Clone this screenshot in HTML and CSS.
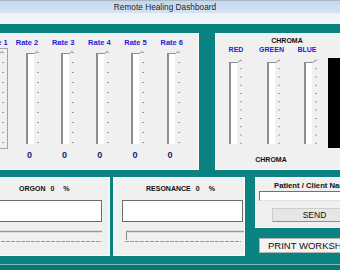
FILE: index.html
```html
<!DOCTYPE html>
<html lang="en">
  <head>
    <meta charset="UTF-8" />
    <meta name="viewport" content="width=device-width, initial-scale=1.0" />
    <title>Remote Healing Dashboard</title>
    <link rel="stylesheet" href="styles.css">
  </head>
  <body>
    <!-- shared slider drawings -->
    <svg class="defs" width="0" height="0">
      <symbol id="rate-track" viewBox="0 0 19 101">
        <rect x="1" y="5" width="2" height="91" fill="#8e8e8e" />
        <rect x="3" y="6" width="6" height="90" fill="#ffffff" />
        <polyline points="1,5.5 9.5,5.5 12.5,3" fill="none" stroke="#8e8e8e" />
        <line x1="13" y1="4" x2="13" y2="95" stroke="#9c9c9c" stroke-width="2" stroke-dasharray="1 9" />
      </symbol>
      <symbol id="chroma-track" viewBox="0 0 19 90">
        <rect x="1" y="5" width="2" height="82" fill="#8e8e8e" />
        <rect x="3" y="6" width="6" height="81" fill="#ffffff" />
        <polyline points="1,5.5 9.5,5.5 13.5,3" fill="none" stroke="#8e8e8e" />
        <line x1="13" y1="3" x2="13" y2="87" stroke="#9c9c9c" stroke-width="2" stroke-dasharray="1 7.27" />
      </symbol>
    </svg>

    <div class="titlebar">Remote Healing Dashboard</div>

    <div class="workspace">
      <div class="top-row">
        <div class="panel rates">
          <div class="rate-labels">
            <span class="rate-label first">Rate 1</span>
            <span class="rate-label">Rate 2</span>
            <span class="rate-label">Rate 3</span>
            <span class="rate-label">Rate 4</span>
            <span class="rate-label">Rate 5</span>
            <span class="rate-label">Rate 6</span>
          </div>
          <div class="rate-sliders">
            <svg class="vslider" width="19" height="101" viewBox="0 0 19 101">
              <use href="#rate-track" />
              <rect x="0.5" y="0.5" width="17" height="100" fill="none" stroke="#a4a4a4" />
            </svg>
            <svg class="vslider" width="19" height="101"><use href="#rate-track" /></svg>
            <svg class="vslider" width="19" height="101"><use href="#rate-track" /></svg>
            <svg class="vslider" width="19" height="101"><use href="#rate-track" /></svg>
            <svg class="vslider" width="19" height="101"><use href="#rate-track" /></svg>
            <svg class="vslider" width="19" height="101"><use href="#rate-track" /></svg>
          </div>
          <div class="rate-values">
            <span class="rate-value">0</span>
            <span class="rate-value">0</span>
            <span class="rate-value">0</span>
            <span class="rate-value">0</span>
            <span class="rate-value">0</span>
            <span class="rate-value">0</span>
          </div>
        </div>

        <div class="panel chroma">
          <div class="chroma-title">CHROMA</div>
          <div class="chroma-labels">
            <span class="chroma-label">RED</span>
            <span class="chroma-label">GREEN</span>
            <span class="chroma-label">BLUE</span>
          </div>
          <div class="chroma-row">
            <svg class="vslider" width="19" height="90"><use href="#chroma-track" /></svg>
            <svg class="vslider" width="19" height="90"><use href="#chroma-track" /></svg>
            <svg class="vslider" width="19" height="90"><use href="#chroma-track" /></svg>
            <div class="swatch"></div>
          </div>
          <div class="chroma-caption">CHROMA</div>
        </div>
      </div>

      <div class="bottom-row">
        <div class="panel meter orgon">
          <div class="meter-title">
            <span>ORGON</span><span class="num">0</span><span class="pct">%</span>
          </div>
          <div class="readout"></div>
          <svg class="hslider" width="111" height="14">
            <line x1="0" y1="2.5" x2="111" y2="2.5" stroke="#9a9a9a" stroke-width="1.3" />
            <line x1="0" y1="12.5" x2="111" y2="12.5" stroke="#999999" stroke-dasharray="4 1" />
          </svg>
        </div>

        <div class="panel meter resonance">
          <div class="meter-title">
            <span>RESONANCE</span><span class="num">0</span><span class="pct">%</span>
          </div>
          <div class="readout"></div>
          <svg class="hslider" width="120" height="14">
            <line x1="2" y1="2.5" x2="120" y2="2.5" stroke="#9a9a9a" stroke-width="1.3" />
            <line x1="2.5" y1="2" x2="2.5" y2="11" stroke="#888888" />
            <line x1="1" y1="12.5" x2="117" y2="12.5" stroke="#999999" stroke-dasharray="4 1" />
          </svg>
        </div>

        <div class="side">
          <div class="panel patient">
            <div class="patient-label">Patient / Client Name</div>
            <input class="patient-input" type="text" aria-label="Patient / Client Name" />
            <button class="send-btn" type="button">SEND</button>
          </div>
          <button class="print-btn" type="button">PRINT WORKSHEET</button>
        </div>
      </div>
    </div>

    <div class="statusbar"></div>
  </body>
</html>
```

FILE: styles.css
```css
html,
body {
  margin: 0;
  overflow: hidden;
}
body {
  width: 340px;
  height: 270px;
  background: #0b8282;
  font-family: "Liberation Sans", Arial, sans-serif;
}
.defs {
  position: absolute;
  width: 0;
  height: 0;
}
.titlebar {
  height: 24px;
  box-sizing: border-box;
  padding: 2px 10px 0 0;
  border-top: 1px solid #a9b7c6;
  background: linear-gradient(to bottom, #c5d8ee 0, #d4e3f3 12px, #edf2f8 12px, #f3f6f9 23px);
  text-align: center;
  font-size: 8.3px;
  line-height: 9px;
  color: #1f1f1f;
}
.workspace {
  display: flex;
  flex-direction: column;
  gap: 7px;
  padding-top: 9px;
}
.panel {
  box-sizing: border-box;
  flex-shrink: 0;
  background: #f0f0f0;
  border: 1px solid #fafafa;
}
.vslider,
.hslider {
  display: block;
  flex-shrink: 0;
}

/* top row */
.top-row {
  display: flex;
  gap: 16px;
  height: 137px;
  margin-left: -30px;
}
.rates {
  width: 229px;
  padding-top: 4px;
}
.rate-labels {
  display: flex;
  padding-left: 7.4px;
  font-size: 7.5px;
  line-height: 9px;
  font-weight: bold;
  color: #2222d8;
}
.rate-label {
  flex-shrink: 0;
  width: 36.2px;
  text-align: center;
}
.rate-label.first {
  margin-right: -5.7px;
}
.rate-sliders {
  display: flex;
  gap: 16.17px;
  margin-top: 1px;
  padding-left: 18.8px;
}
.rate-values {
  display: flex;
  margin-top: 1px;
  padding-left: 5.7px;
  font-size: 9px;
  line-height: 10px;
  font-weight: bold;
  color: #1c1c84;
}
.rate-value {
  flex-shrink: 0;
  width: 35.17px;
  text-align: center;
}
.chroma {
  width: 150px;
  padding-top: 2px;
  font-size: 7px;
  line-height: 9px;
  font-weight: bold;
  color: #111;
}
.chroma-title {
  width: 142px;
  text-align: center;
}
.chroma-labels {
  display: flex;
  padding-left: 2.25px;
  color: #2222d8;
}
.chroma-label {
  flex-shrink: 0;
  width: 35.5px;
  text-align: center;
}
.chroma-row {
  display: flex;
  align-items: flex-start;
  gap: 18.5px;
  margin-top: 3px;
  padding-left: 12px;
}
.swatch {
  flex-shrink: 0;
  width: 30px;
  height: 90px;
  margin: 1px 0 0 -12.8px;
  background: #000;
}
.chroma-caption {
  width: 110px;
  margin-top: 6.5px;
  text-align: center;
}

/* bottom row */
.bottom-row {
  display: flex;
  align-items: flex-start;
  margin-left: -20px;
}
.meter {
  height: 79px;
  padding-top: 6px;
}
.meter-title {
  font-size: 7px;
  line-height: 9px;
  font-weight: bold;
  color: #111;
  white-space: nowrap;
}
.meter-title .num {
  margin-left: 5px;
}
.meter-title .pct {
  margin-left: 9px;
}
.readout {
  box-sizing: border-box;
  height: 22px;
  margin-top: 7px;
  background: #fff;
  border: 1px solid #6b6b6b;
}
.hslider {
  margin-top: 7px;
}
.orgon {
  width: 130px;
  margin-right: 3px;
}
.orgon .meter-title {
  padding-left: 38px;
}
.orgon .readout,
.orgon .hslider {
  width: 111px;
  margin-left: 10px;
}
.resonance {
  width: 132px;
  margin-right: 10px;
}
.resonance .meter-title {
  padding-left: 32px;
}
.resonance .readout {
  width: 121px;
  margin-left: 8px;
}
.resonance .hslider {
  margin-left: 10px;
}
.side {
  flex-shrink: 0;
  display: flex;
  flex-direction: column;
  width: 100px;
}
.patient {
  height: 51px;
  padding-top: 3px;
}
.patient-label {
  padding-left: 18px;
  font-size: 7.7px;
  line-height: 9px;
  font-weight: bold;
  color: #111;
  white-space: nowrap;
}
.patient-input {
  display: block;
  box-sizing: border-box;
  width: 100px;
  height: 10px;
  margin: 1px 0 0 3px;
  padding: 0;
  background: #fff;
  border: 1px solid;
  border-color: #707070 #e3e3e3 #e3e3e3 #707070;
}
.send-btn {
  display: block;
  box-sizing: border-box;
  width: 85px;
  height: 14px;
  margin: 7px 0 0 16px;
  padding: 0;
  background: #e6e6e6;
  border: 1px solid #cdcdcd;
  border-bottom-color: #8f8f8f;
  font-family: "Liberation Sans", Arial, sans-serif;
  font-size: 8.5px;
  color: #111;
}
.print-btn {
  box-sizing: border-box;
  width: 100px;
  height: 15px;
  margin: 10px 0 0 4px;
  padding: 0 0 0 8px;
  background: #f3f3f3;
  border: 1px solid #b4b4b4;
  text-align: left;
  white-space: nowrap;
  font-family: "Liberation Sans", Arial, sans-serif;
  font-size: 9.5px;
  color: #111;
}
.statusbar {
  height: 6px;
  margin-top: 8px;
  border-top: 1px solid #7dbaba;
  background: #0a7676;
}
```
